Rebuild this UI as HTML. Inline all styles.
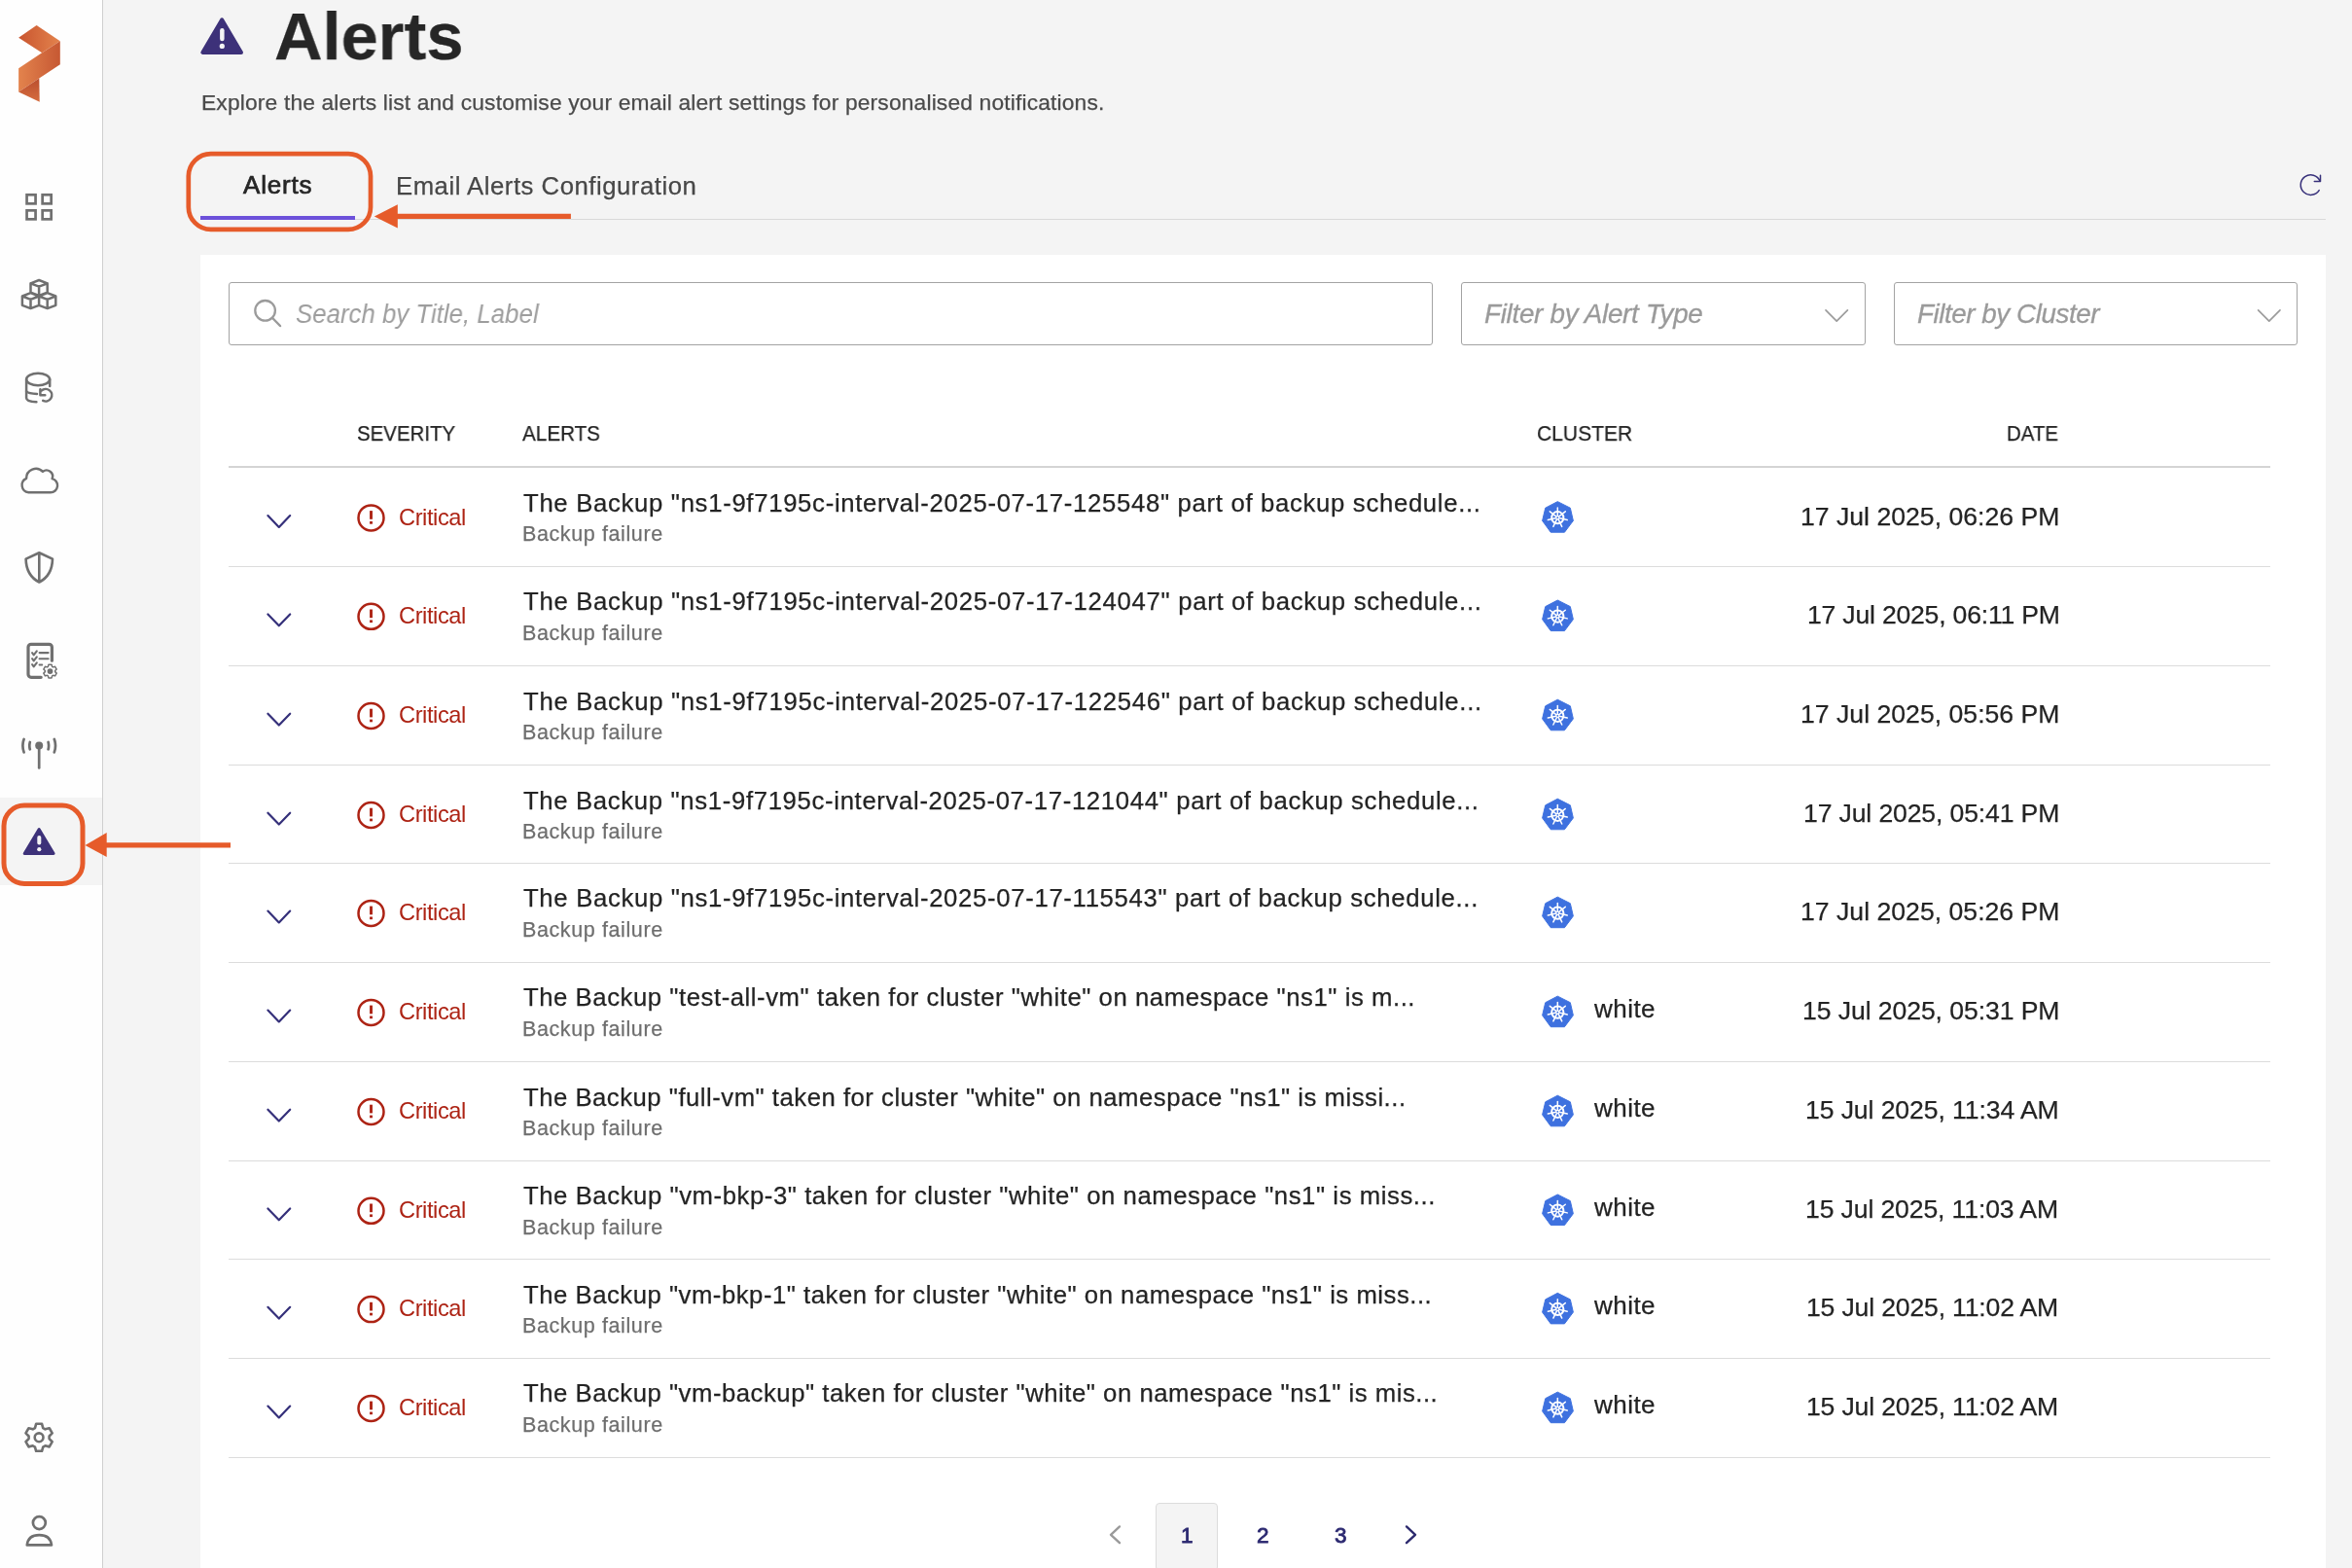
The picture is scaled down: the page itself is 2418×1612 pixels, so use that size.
<!DOCTYPE html>
<html><head><meta charset="utf-8"><title>Alerts</title>
<style>
html,body{margin:0;padding:0;}
body{width:2418px;height:1612px;overflow:hidden;position:relative;background:#f4f4f4;font-family:"Liberation Sans",sans-serif;}
.t{position:absolute;white-space:nowrap;line-height:1;will-change:transform;-webkit-text-stroke:0.25px currentColor;}
.box{position:absolute;box-sizing:border-box;border:1.5px solid #a3a3a3;border-radius:3px;background:#fff;}
</style></head><body>
<div style="position:absolute;left:0;top:0;width:105px;height:1612px;background:#fefefe;border-right:1.5px solid #cfcfcf"></div>
<div style="position:absolute;left:0;top:820px;width:105px;height:90px;background:#f4f4f4"></div>
<div style="position:absolute;left:206px;top:224.8px;width:2185px;height:1px;background:#d9d9d9"></div>
<div style="position:absolute;left:205.5px;top:222.4px;width:159.7px;height:3.8px;background:#6c50da"></div>
<div style="position:absolute;left:206px;top:262px;width:2185px;height:1350px;background:#ffffff"></div>
<div class="box" style="left:235px;top:290px;width:1238px;height:65px"></div>
<div class="box" style="left:1502px;top:290px;width:416px;height:64.5px"></div>
<div class="box" style="left:1947px;top:290px;width:415px;height:64.5px"></div>
<div style="position:absolute;left:235px;top:478.7px;width:2099px;height:2px;background:#d4d4d4"></div><div style="position:absolute;left:235px;top:581.7px;width:2099px;height:1px;background:#dcdcdc"></div><div style="position:absolute;left:235px;top:683.9px;width:2099px;height:1px;background:#dcdcdc"></div><div style="position:absolute;left:235px;top:785.9px;width:2099px;height:1px;background:#dcdcdc"></div><div style="position:absolute;left:235px;top:886.8px;width:2099px;height:1px;background:#dcdcdc"></div><div style="position:absolute;left:235px;top:988.8px;width:2099px;height:1px;background:#dcdcdc"></div><div style="position:absolute;left:235px;top:1090.9px;width:2099px;height:1px;background:#dcdcdc"></div><div style="position:absolute;left:235px;top:1192.7px;width:2099px;height:1px;background:#dcdcdc"></div><div style="position:absolute;left:235px;top:1294.0px;width:2099px;height:1px;background:#dcdcdc"></div><div style="position:absolute;left:235px;top:1395.8px;width:2099px;height:1px;background:#dcdcdc"></div><div style="position:absolute;left:235px;top:1497.8px;width:2099px;height:1px;background:#dcdcdc"></div>
<div style="position:absolute;left:1187.6px;top:1545.1px;width:64px;height:70px;box-sizing:border-box;background:#f4f4f4;border:1.5px solid #dcdcdc;border-radius:4px"></div>
<div class="t" style="left:282.11px;top:2.79px;font-size:69px;font-weight:bold;font-style:normal;color:#262626;letter-spacing:0.000px;transform:scaleX(0.9943);transform-origin:0 0;">Alerts</div>
<div class="t" style="left:207.00px;top:93.70px;font-size:22.8px;font-weight:normal;font-style:normal;color:#4a4a4a;letter-spacing:0.157px;">Explore the alerts list and customise your email alert settings for personalised notifications.</div>
<div class="t" style="left:250.20px;top:177.39px;font-size:26px;font-weight:normal;font-style:normal;color:#262626;letter-spacing:0.828px;-webkit-text-stroke:0.7px #262626;">Alerts</div>
<div class="t" style="left:406.80px;top:178.64px;font-size:25.7px;font-weight:normal;font-style:normal;color:#474747;letter-spacing:0.529px;">Email Alerts Configuration</div>
<div class="t" style="left:303.50px;top:309.94px;font-size:27px;font-weight:normal;font-style:italic;color:#9d9d9d;letter-spacing:0.000px;-webkit-text-stroke:0;transform:scaleX(0.9565);transform-origin:0 0;">Search by Title, Label</div>
<div class="t" style="left:1526.40px;top:308.77px;font-size:27.8px;font-weight:normal;font-style:italic;color:#9a9a9a;letter-spacing:-0.280px;-webkit-text-stroke:0.3px #9a9a9a;">Filter by Alert Type</div>
<div class="t" style="left:1970.50px;top:308.77px;font-size:27.8px;font-weight:normal;font-style:italic;color:#9a9a9a;letter-spacing:-0.448px;-webkit-text-stroke:0.3px #9a9a9a;">Filter by Cluster</div>
<div class="t" style="left:367.48px;top:434.81px;font-size:22.2px;font-weight:normal;font-style:normal;color:#232323;letter-spacing:0.000px;transform:scaleX(0.9207);transform-origin:0 0;">SEVERITY</div>
<div class="t" style="left:537.40px;top:434.81px;font-size:22.2px;font-weight:normal;font-style:normal;color:#232323;letter-spacing:0.000px;transform:scaleX(0.9317);transform-origin:0 0;">ALERTS</div>
<div class="t" style="left:1579.85px;top:434.81px;font-size:22.2px;font-weight:normal;font-style:normal;color:#232323;letter-spacing:0.000px;transform:scaleX(0.9484);transform-origin:0 0;">CLUSTER</div>
<div class="t" style="left:2063.18px;top:434.81px;font-size:22.2px;font-weight:normal;font-style:normal;color:#232323;letter-spacing:0.000px;transform:scaleX(0.9206);transform-origin:0 0;">DATE</div>
<div class="t" style="left:410.30px;top:520.52px;font-size:23.6px;font-weight:normal;font-style:normal;color:#ad2314;letter-spacing:-0.408px;-webkit-text-stroke:0;">Critical</div>
<div class="t" style="left:538.10px;top:504.94px;font-size:25.7px;font-weight:normal;font-style:normal;color:#232323;letter-spacing:0.692px;">The Backup &quot;ns1-9f7195c-interval-2025-07-17-125548&quot; part of backup schedule...</div>
<div class="t" style="left:537.10px;top:539.30px;font-size:21.5px;font-weight:normal;font-style:normal;color:#6e6e6e;letter-spacing:0.609px;">Backup failure</div>
<div class="t" style="left:1851.30px;top:517.68px;font-size:26.6px;font-weight:normal;font-style:normal;color:#232323;letter-spacing:0.012px;">17 Jul 2025, 06:26 PM</div>
<div class="t" style="left:410.30px;top:621.92px;font-size:23.6px;font-weight:normal;font-style:normal;color:#ad2314;letter-spacing:-0.408px;-webkit-text-stroke:0;">Critical</div>
<div class="t" style="left:538.10px;top:606.34px;font-size:25.7px;font-weight:normal;font-style:normal;color:#232323;letter-spacing:0.704px;">The Backup &quot;ns1-9f7195c-interval-2025-07-17-124047&quot; part of backup schedule...</div>
<div class="t" style="left:537.10px;top:640.70px;font-size:21.5px;font-weight:normal;font-style:normal;color:#6e6e6e;letter-spacing:0.609px;">Backup failure</div>
<div class="t" style="left:1857.70px;top:619.08px;font-size:26.6px;font-weight:normal;font-style:normal;color:#232323;letter-spacing:-0.210px;">17 Jul 2025, 06:11 PM</div>
<div class="t" style="left:410.30px;top:724.12px;font-size:23.6px;font-weight:normal;font-style:normal;color:#ad2314;letter-spacing:-0.408px;-webkit-text-stroke:0;">Critical</div>
<div class="t" style="left:538.10px;top:708.54px;font-size:25.7px;font-weight:normal;font-style:normal;color:#232323;letter-spacing:0.707px;">The Backup &quot;ns1-9f7195c-interval-2025-07-17-122546&quot; part of backup schedule...</div>
<div class="t" style="left:537.10px;top:742.90px;font-size:21.5px;font-weight:normal;font-style:normal;color:#6e6e6e;letter-spacing:0.609px;">Backup failure</div>
<div class="t" style="left:1851.20px;top:721.28px;font-size:26.6px;font-weight:normal;font-style:normal;color:#232323;letter-spacing:0.017px;">17 Jul 2025, 05:56 PM</div>
<div class="t" style="left:410.30px;top:826.12px;font-size:23.6px;font-weight:normal;font-style:normal;color:#ad2314;letter-spacing:-0.408px;-webkit-text-stroke:0;">Critical</div>
<div class="t" style="left:538.10px;top:810.54px;font-size:25.7px;font-weight:normal;font-style:normal;color:#232323;letter-spacing:0.666px;">The Backup &quot;ns1-9f7195c-interval-2025-07-17-121044&quot; part of backup schedule...</div>
<div class="t" style="left:537.10px;top:844.90px;font-size:21.5px;font-weight:normal;font-style:normal;color:#6e6e6e;letter-spacing:0.609px;">Backup failure</div>
<div class="t" style="left:1854.30px;top:823.28px;font-size:26.6px;font-weight:normal;font-style:normal;color:#232323;letter-spacing:-0.138px;">17 Jul 2025, 05:41 PM</div>
<div class="t" style="left:410.30px;top:927.02px;font-size:23.6px;font-weight:normal;font-style:normal;color:#ad2314;letter-spacing:-0.408px;-webkit-text-stroke:0;">Critical</div>
<div class="t" style="left:538.10px;top:911.44px;font-size:25.7px;font-weight:normal;font-style:normal;color:#232323;letter-spacing:0.682px;">The Backup &quot;ns1-9f7195c-interval-2025-07-17-115543&quot; part of backup schedule...</div>
<div class="t" style="left:537.10px;top:945.80px;font-size:21.5px;font-weight:normal;font-style:normal;color:#6e6e6e;letter-spacing:0.609px;">Backup failure</div>
<div class="t" style="left:1851.20px;top:924.18px;font-size:26.6px;font-weight:normal;font-style:normal;color:#232323;letter-spacing:0.017px;">17 Jul 2025, 05:26 PM</div>
<div class="t" style="left:410.30px;top:1029.02px;font-size:23.6px;font-weight:normal;font-style:normal;color:#ad2314;letter-spacing:-0.408px;-webkit-text-stroke:0;">Critical</div>
<div class="t" style="left:538.10px;top:1013.44px;font-size:25.7px;font-weight:normal;font-style:normal;color:#232323;letter-spacing:0.556px;">The Backup &quot;test-all-vm&quot; taken for cluster &quot;white&quot; on namespace &quot;ns1&quot; is m...</div>
<div class="t" style="left:537.10px;top:1047.80px;font-size:21.5px;font-weight:normal;font-style:normal;color:#6e6e6e;letter-spacing:0.609px;">Backup failure</div>
<div class="t" style="left:1638.90px;top:1023.99px;font-size:26px;font-weight:normal;font-style:normal;color:#232323;letter-spacing:0.466px;">white</div>
<div class="t" style="left:1853.20px;top:1026.18px;font-size:26.6px;font-weight:normal;font-style:normal;color:#232323;letter-spacing:-0.083px;">15 Jul 2025, 05:31 PM</div>
<div class="t" style="left:410.30px;top:1131.12px;font-size:23.6px;font-weight:normal;font-style:normal;color:#ad2314;letter-spacing:-0.408px;-webkit-text-stroke:0;">Critical</div>
<div class="t" style="left:538.10px;top:1115.54px;font-size:25.7px;font-weight:normal;font-style:normal;color:#232323;letter-spacing:0.507px;">The Backup &quot;full-vm&quot; taken for cluster &quot;white&quot; on namespace &quot;ns1&quot; is missi...</div>
<div class="t" style="left:537.10px;top:1149.90px;font-size:21.5px;font-weight:normal;font-style:normal;color:#6e6e6e;letter-spacing:0.609px;">Backup failure</div>
<div class="t" style="left:1638.90px;top:1126.09px;font-size:26px;font-weight:normal;font-style:normal;color:#232323;letter-spacing:0.466px;">white</div>
<div class="t" style="left:1855.50px;top:1128.28px;font-size:26.6px;font-weight:normal;font-style:normal;color:#232323;letter-spacing:-0.100px;">15 Jul 2025, 11:34 AM</div>
<div class="t" style="left:410.30px;top:1232.92px;font-size:23.6px;font-weight:normal;font-style:normal;color:#ad2314;letter-spacing:-0.408px;-webkit-text-stroke:0;">Critical</div>
<div class="t" style="left:538.10px;top:1217.34px;font-size:25.7px;font-weight:normal;font-style:normal;color:#232323;letter-spacing:0.568px;">The Backup &quot;vm-bkp-3&quot; taken for cluster &quot;white&quot; on namespace &quot;ns1&quot; is miss...</div>
<div class="t" style="left:537.10px;top:1251.70px;font-size:21.5px;font-weight:normal;font-style:normal;color:#6e6e6e;letter-spacing:0.609px;">Backup failure</div>
<div class="t" style="left:1638.90px;top:1227.89px;font-size:26px;font-weight:normal;font-style:normal;color:#232323;letter-spacing:0.466px;">white</div>
<div class="t" style="left:1856.10px;top:1230.08px;font-size:26.6px;font-weight:normal;font-style:normal;color:#232323;letter-spacing:-0.130px;">15 Jul 2025, 11:03 AM</div>
<div class="t" style="left:410.30px;top:1334.22px;font-size:23.6px;font-weight:normal;font-style:normal;color:#ad2314;letter-spacing:-0.408px;-webkit-text-stroke:0;">Critical</div>
<div class="t" style="left:538.10px;top:1318.64px;font-size:25.7px;font-weight:normal;font-style:normal;color:#232323;letter-spacing:0.520px;">The Backup &quot;vm-bkp-1&quot; taken for cluster &quot;white&quot; on namespace &quot;ns1&quot; is miss...</div>
<div class="t" style="left:537.10px;top:1353.00px;font-size:21.5px;font-weight:normal;font-style:normal;color:#6e6e6e;letter-spacing:0.609px;">Backup failure</div>
<div class="t" style="left:1638.90px;top:1329.19px;font-size:26px;font-weight:normal;font-style:normal;color:#232323;letter-spacing:0.466px;">white</div>
<div class="t" style="left:1856.90px;top:1331.38px;font-size:26.6px;font-weight:normal;font-style:normal;color:#232323;letter-spacing:-0.170px;">15 Jul 2025, 11:02 AM</div>
<div class="t" style="left:410.30px;top:1436.02px;font-size:23.6px;font-weight:normal;font-style:normal;color:#ad2314;letter-spacing:-0.408px;-webkit-text-stroke:0;">Critical</div>
<div class="t" style="left:538.10px;top:1420.44px;font-size:25.7px;font-weight:normal;font-style:normal;color:#232323;letter-spacing:0.524px;">The Backup &quot;vm-backup&quot; taken for cluster &quot;white&quot; on namespace &quot;ns1&quot; is mis...</div>
<div class="t" style="left:537.10px;top:1454.80px;font-size:21.5px;font-weight:normal;font-style:normal;color:#6e6e6e;letter-spacing:0.609px;">Backup failure</div>
<div class="t" style="left:1638.90px;top:1430.99px;font-size:26px;font-weight:normal;font-style:normal;color:#232323;letter-spacing:0.466px;">white</div>
<div class="t" style="left:1856.90px;top:1433.18px;font-size:26.6px;font-weight:normal;font-style:normal;color:#232323;letter-spacing:-0.170px;">15 Jul 2025, 11:02 AM</div>
<div class="t" style="left:1214.30px;top:1568.25px;font-size:22.5px;font-weight:normal;font-style:normal;color:#2b2870;letter-spacing:0.000px;-webkit-text-stroke:0.8px #2b2870;">1</div>
<div class="t" style="left:1291.70px;top:1568.25px;font-size:22.5px;font-weight:normal;font-style:normal;color:#2b2870;letter-spacing:0.000px;-webkit-text-stroke:0.8px #2b2870;">2</div>
<div class="t" style="left:1371.80px;top:1568.25px;font-size:22.5px;font-weight:normal;font-style:normal;color:#2b2870;letter-spacing:0.000px;-webkit-text-stroke:0.8px #2b2870;">3</div>
<svg style="position:absolute;left:0;top:0" width="2418" height="1612" viewBox="0 0 2418 1612">
<defs>
<linearGradient id="lg1" x1="19" y1="0" x2="62" y2="0" gradientUnits="userSpaceOnUse"><stop offset="0" stop-color="#c9552f"/><stop offset="1" stop-color="#e3834d"/></linearGradient>
<linearGradient id="lg2" x1="19" y1="0" x2="62" y2="0" gradientUnits="userSpaceOnUse"><stop offset="0" stop-color="#e3834d"/><stop offset="1" stop-color="#c65833"/></linearGradient>
<linearGradient id="lg3" x1="0" y1="80" x2="0" y2="105" gradientUnits="userSpaceOnUse"><stop offset="0" stop-color="#b94d2d"/><stop offset="1" stop-color="#d66d3f"/></linearGradient>
</defs>
<polygon points="19.1,38.7 37.6,25.9 61.8,42.3 43.1,54.2" fill="url(#lg1)"/>
<polygon points="43.1,54.2 61.8,42.3 61.8,66.2 19.1,94.5 19.1,70.2" fill="url(#lg2)"/>
<polygon points="19.1,94.5 40.3,80.5 40.7,104.8" fill="url(#lg3)"/>
<g fill="none" stroke="#707070" stroke-width="2.7" stroke-linejoin="miter"><rect x="27.55" y="200.25" width="9.0" height="9.1"/><rect x="43.65" y="200.25" width="9.0" height="9.1"/><rect x="27.55" y="216.35" width="9.0" height="9.0"/><rect x="43.65" y="216.35" width="9.0" height="9.0"/></g>
<path d="M40.10,288.00 L31.50,291.30 L31.50,300.60 L40.10,303.90 L48.70,300.60 L48.70,291.30 Z M31.50,291.30 L40.10,294.60 L48.70,291.30 M40.10,294.60 L40.10,303.90 M31.50,301.20 L22.90,304.50 L22.90,313.80 L31.50,317.10 L40.10,313.80 L40.10,304.50 Z M22.90,304.50 L31.50,307.80 L40.10,304.50 M31.50,307.80 L31.50,317.10 M48.70,301.20 L40.10,304.50 L40.10,313.80 L48.70,317.10 L57.30,313.80 L57.30,304.50 Z M40.10,304.50 L48.70,307.80 L57.30,304.50 M48.70,307.80 L48.70,317.10" fill="none" stroke="#707070" stroke-linecap="round" stroke-linejoin="round" stroke-width="2.5"/>
<g fill="none" stroke="#707070" stroke-linecap="round" stroke-linejoin="round" stroke-width="2.5"><ellipse cx="39.1" cy="390" rx="12" ry="6.3"/><path d="M27.1,390 V409 C27.1,411.5 31,413 37.4,413.3"/><path d="M51.2,390 V397"/><path d="M27.1,402.3 C28.5,404 32,404.8 38,405"/><path d="M42.6,401.7 A6.3,6.3 0 1 1 44.2,411.9"/><path d="M41.4,400.3 V406.2 H46.3"/></g>
<path d="M29.4,506.3 H51.9 A7.2,7.2 0 0 0 53.6,492.1 A6.2,6.2 0 0 0 44,484.9 A9.8,9.8 0 0 0 27.1,491.8 A7.6,7.6 0 0 0 29.4,506.3 Z" fill="none" stroke="#707070" stroke-linecap="round" stroke-linejoin="round" stroke-width="2.4"/>
<path d="M40.3,568.3 L26.6,574.6 C26.8,585 31.5,594 40.3,598.5 C49.1,594 53.8,585 54,574.6 Z M40.3,568.3 V598.5" fill="none" stroke="#707070" stroke-linecap="round" stroke-linejoin="round" stroke-width="2.6"/>
<g fill="none" stroke="#707070" stroke-linecap="round" stroke-linejoin="round" stroke-width="3.2"><path d="M42.2,696.3 H32 A3,3 0 0 1 29,693.3 V665.3 A3,3 0 0 1 32,662.3 H50.4 A3,3 0 0 1 53.4,665.3 V679.2"/></g>
<g fill="none" stroke="#707070" stroke-linecap="round" stroke-linejoin="round" stroke-width="2.1"><path d="M33.1,671.2 L34.7,673.3 L37.8,669.3 M33.1,677.2 L34.7,679.3 L37.8,675.3 M33.1,683.2 L34.7,685.3 L37.8,681.3"/><path d="M40.6,671.1 H49.6 M40.6,677.2 H49.6 M40.6,683.5 H43.2"/></g>
<path d="M49.38,685.35 L49.93,683.28 L53.07,683.28 L53.62,685.35 L54.56,685.89 L56.62,685.33 L58.19,688.05 L56.67,689.56 L56.67,690.64 L58.19,692.15 L56.62,694.87 L54.56,694.31 L53.62,694.85 L53.07,696.92 L49.93,696.92 L49.38,694.85 L48.44,694.31 L46.38,694.87 L44.81,692.15 L46.33,690.64 L46.33,689.56 L44.81,688.05 L46.38,685.33 L48.44,685.89 Z" fill="none" stroke="#707070" stroke-linecap="round" stroke-linejoin="round" stroke-width="1.5"/>
<circle cx="51.5" cy="690.1" r="2.9" fill="#707070"/>
<g fill="none" stroke="#707070" stroke-linecap="round" stroke-linejoin="round" stroke-width="2.7"><path d="M40.2,768 V789.5"/><path d="M30.8,763 Q29.8,766.6 30.8,770.3 M49.6,763 Q50.6,766.6 49.6,770.3"/><path d="M24.6,760 Q22.2,766.6 24.6,773.4 M55.8,760 Q58.2,766.6 55.8,773.4"/></g>
<circle cx="40.2" cy="766.6" r="4" fill="#707070"/>
<polygon points="40.15,852.58 25.18,877.52 55.12,877.52" fill="#3d3179" stroke="#3d3179" stroke-width="2.96" stroke-linejoin="round"/><rect x="38.3" y="859.0" width="4.00" height="9.60" rx="2.00" fill="#f4f4f4"/><circle cx="40.3" cy="873.2" r="2.1" fill="#f4f4f4"/>
<polygon points="228.15,20.26 208.27,53.93 248.03,53.93" fill="#3d3179" stroke="#3d3179" stroke-width="3.93" stroke-linejoin="round"/><rect x="226.1" y="29.1" width="4.50" height="13.20" rx="2.25" fill="#f4f4f4"/><circle cx="228.3" cy="47.4" r="2.6" fill="#f4f4f4"/>
<path d="M35.96,1468.04 L37.13,1463.81 L43.07,1463.81 L44.24,1468.04 L46.48,1469.33 L50.73,1468.23 L53.70,1473.38 L50.62,1476.51 L50.62,1479.09 L53.70,1482.22 L50.73,1487.37 L46.48,1486.27 L44.24,1487.56 L43.07,1491.79 L37.13,1491.79 L35.96,1487.56 L33.72,1486.27 L29.47,1487.37 L26.50,1482.22 L29.58,1479.09 L29.58,1476.51 L26.50,1473.38 L29.47,1468.23 L33.72,1469.33 Z" fill="none" stroke="#707070" stroke-linecap="round" stroke-linejoin="round" stroke-width="2.6"/>
<circle cx="40.1" cy="1477.8" r="4.4" fill="none" stroke="#707070" stroke-linecap="round" stroke-linejoin="round" stroke-width="2.6"/>
<circle cx="40.35" cy="1565.6" r="6.45" fill="none" stroke="#707070" stroke-linecap="round" stroke-linejoin="round" stroke-width="2.7"/>
<path d="M27.8,1588.4 C28.5,1582 33,1578.2 40.35,1578.2 C47.7,1578.2 52.2,1582 53,1588.4 Z" fill="none" stroke="#707070" stroke-linecap="round" stroke-linejoin="round" stroke-width="2.7"/>
<path d="M2385.0,186.0 A10.3,10.3 0 1 0 2384.2,195.65" fill="none" stroke="#37307a" stroke-width="1.5" stroke-linecap="round"/>
<path d="M2385.5,180.2 V186.5 H2379.3" fill="none" stroke="#37307a" stroke-width="1.5" stroke-linecap="round" stroke-linejoin="round"/>
<circle cx="272.6" cy="319.3" r="10.3" fill="none" stroke="#9b9b9b" stroke-width="2.3"/>
<path d="M280.2,327 L288,335" fill="none" stroke="#9b9b9b" stroke-width="2.5" stroke-linecap="round"/>
<polyline points="1877.00,318.80 1888.20,330.20 1899.40,318.80" fill="none" stroke="#9c9c9c" stroke-width="1.7" stroke-linecap="round" stroke-linejoin="round"/>
<polyline points="2321.60,318.80 2332.80,330.20 2344.00,318.80" fill="none" stroke="#9c9c9c" stroke-width="1.7" stroke-linecap="round" stroke-linejoin="round"/>
<polyline points="275.40,530.10 286.80,541.90 298.20,530.10" fill="none" stroke="#35307a" stroke-width="2.2" stroke-linecap="round" stroke-linejoin="round"/>
<circle cx="381.5" cy="532.4" r="13.0" fill="none" stroke="#ad2314" stroke-width="2.5"/><rect x="380.05" y="525.10" width="2.9" height="8.7" fill="#ad2314"/><rect x="380.05" y="536.00" width="2.9" height="2.7" fill="#ad2314"/>
<polygon points="1601.30,515.63 1614.33,522.20 1617.37,535.33 1608.45,547.19 1594.24,547.19 1585.62,535.33 1588.76,522.20" fill="#3e71df" stroke="#3e71df" stroke-width="1.0" stroke-linejoin="round"/>
<circle cx="1601.30" cy="532.20" r="6.1" fill="none" stroke="#fff" stroke-width="2.0"/>
<line x1="1601.30" y1="530.60" x2="1601.30" y2="522.00" stroke="#fff" stroke-width="1.5" stroke-linecap="round"/>
<line x1="1602.55" y1="531.20" x2="1609.27" y2="525.84" stroke="#fff" stroke-width="1.5" stroke-linecap="round"/>
<line x1="1602.86" y1="532.56" x2="1611.24" y2="534.47" stroke="#fff" stroke-width="1.5" stroke-linecap="round"/>
<line x1="1601.99" y1="533.64" x2="1605.73" y2="541.39" stroke="#fff" stroke-width="1.5" stroke-linecap="round"/>
<line x1="1600.61" y1="533.64" x2="1596.87" y2="541.39" stroke="#fff" stroke-width="1.5" stroke-linecap="round"/>
<line x1="1599.74" y1="532.56" x2="1591.36" y2="534.47" stroke="#fff" stroke-width="1.5" stroke-linecap="round"/>
<line x1="1600.05" y1="531.20" x2="1593.33" y2="525.84" stroke="#fff" stroke-width="1.5" stroke-linecap="round"/>
<circle cx="1601.30" cy="532.20" r="2.0" fill="#fff"/><circle cx="1601.30" cy="532.20" r="0.9" fill="#3e71df"/>
<polyline points="275.40,631.50 286.80,643.30 298.20,631.50" fill="none" stroke="#35307a" stroke-width="2.2" stroke-linecap="round" stroke-linejoin="round"/>
<circle cx="381.5" cy="633.8" r="13.0" fill="none" stroke="#ad2314" stroke-width="2.5"/><rect x="380.05" y="626.50" width="2.9" height="8.7" fill="#ad2314"/><rect x="380.05" y="637.40" width="2.9" height="2.7" fill="#ad2314"/>
<polygon points="1601.30,617.03 1614.33,623.60 1617.37,636.73 1608.45,648.59 1594.24,648.59 1585.62,636.73 1588.76,623.60" fill="#3e71df" stroke="#3e71df" stroke-width="1.0" stroke-linejoin="round"/>
<circle cx="1601.30" cy="633.60" r="6.1" fill="none" stroke="#fff" stroke-width="2.0"/>
<line x1="1601.30" y1="632.00" x2="1601.30" y2="623.40" stroke="#fff" stroke-width="1.5" stroke-linecap="round"/>
<line x1="1602.55" y1="632.60" x2="1609.27" y2="627.24" stroke="#fff" stroke-width="1.5" stroke-linecap="round"/>
<line x1="1602.86" y1="633.96" x2="1611.24" y2="635.87" stroke="#fff" stroke-width="1.5" stroke-linecap="round"/>
<line x1="1601.99" y1="635.04" x2="1605.73" y2="642.79" stroke="#fff" stroke-width="1.5" stroke-linecap="round"/>
<line x1="1600.61" y1="635.04" x2="1596.87" y2="642.79" stroke="#fff" stroke-width="1.5" stroke-linecap="round"/>
<line x1="1599.74" y1="633.96" x2="1591.36" y2="635.87" stroke="#fff" stroke-width="1.5" stroke-linecap="round"/>
<line x1="1600.05" y1="632.60" x2="1593.33" y2="627.24" stroke="#fff" stroke-width="1.5" stroke-linecap="round"/>
<circle cx="1601.30" cy="633.60" r="2.0" fill="#fff"/><circle cx="1601.30" cy="633.60" r="0.9" fill="#3e71df"/>
<polyline points="275.40,733.70 286.80,745.50 298.20,733.70" fill="none" stroke="#35307a" stroke-width="2.2" stroke-linecap="round" stroke-linejoin="round"/>
<circle cx="381.5" cy="736.0" r="13.0" fill="none" stroke="#ad2314" stroke-width="2.5"/><rect x="380.05" y="728.70" width="2.9" height="8.7" fill="#ad2314"/><rect x="380.05" y="739.60" width="2.9" height="2.7" fill="#ad2314"/>
<polygon points="1601.30,719.23 1614.33,725.80 1617.37,738.93 1608.45,750.79 1594.24,750.79 1585.62,738.93 1588.76,725.80" fill="#3e71df" stroke="#3e71df" stroke-width="1.0" stroke-linejoin="round"/>
<circle cx="1601.30" cy="735.80" r="6.1" fill="none" stroke="#fff" stroke-width="2.0"/>
<line x1="1601.30" y1="734.20" x2="1601.30" y2="725.60" stroke="#fff" stroke-width="1.5" stroke-linecap="round"/>
<line x1="1602.55" y1="734.80" x2="1609.27" y2="729.44" stroke="#fff" stroke-width="1.5" stroke-linecap="round"/>
<line x1="1602.86" y1="736.16" x2="1611.24" y2="738.07" stroke="#fff" stroke-width="1.5" stroke-linecap="round"/>
<line x1="1601.99" y1="737.24" x2="1605.73" y2="744.99" stroke="#fff" stroke-width="1.5" stroke-linecap="round"/>
<line x1="1600.61" y1="737.24" x2="1596.87" y2="744.99" stroke="#fff" stroke-width="1.5" stroke-linecap="round"/>
<line x1="1599.74" y1="736.16" x2="1591.36" y2="738.07" stroke="#fff" stroke-width="1.5" stroke-linecap="round"/>
<line x1="1600.05" y1="734.80" x2="1593.33" y2="729.44" stroke="#fff" stroke-width="1.5" stroke-linecap="round"/>
<circle cx="1601.30" cy="735.80" r="2.0" fill="#fff"/><circle cx="1601.30" cy="735.80" r="0.9" fill="#3e71df"/>
<polyline points="275.40,835.70 286.80,847.50 298.20,835.70" fill="none" stroke="#35307a" stroke-width="2.2" stroke-linecap="round" stroke-linejoin="round"/>
<circle cx="381.5" cy="838.0" r="13.0" fill="none" stroke="#ad2314" stroke-width="2.5"/><rect x="380.05" y="830.70" width="2.9" height="8.7" fill="#ad2314"/><rect x="380.05" y="841.60" width="2.9" height="2.7" fill="#ad2314"/>
<polygon points="1601.30,821.23 1614.33,827.80 1617.37,840.93 1608.45,852.79 1594.24,852.79 1585.62,840.93 1588.76,827.80" fill="#3e71df" stroke="#3e71df" stroke-width="1.0" stroke-linejoin="round"/>
<circle cx="1601.30" cy="837.80" r="6.1" fill="none" stroke="#fff" stroke-width="2.0"/>
<line x1="1601.30" y1="836.20" x2="1601.30" y2="827.60" stroke="#fff" stroke-width="1.5" stroke-linecap="round"/>
<line x1="1602.55" y1="836.80" x2="1609.27" y2="831.44" stroke="#fff" stroke-width="1.5" stroke-linecap="round"/>
<line x1="1602.86" y1="838.16" x2="1611.24" y2="840.07" stroke="#fff" stroke-width="1.5" stroke-linecap="round"/>
<line x1="1601.99" y1="839.24" x2="1605.73" y2="846.99" stroke="#fff" stroke-width="1.5" stroke-linecap="round"/>
<line x1="1600.61" y1="839.24" x2="1596.87" y2="846.99" stroke="#fff" stroke-width="1.5" stroke-linecap="round"/>
<line x1="1599.74" y1="838.16" x2="1591.36" y2="840.07" stroke="#fff" stroke-width="1.5" stroke-linecap="round"/>
<line x1="1600.05" y1="836.80" x2="1593.33" y2="831.44" stroke="#fff" stroke-width="1.5" stroke-linecap="round"/>
<circle cx="1601.30" cy="837.80" r="2.0" fill="#fff"/><circle cx="1601.30" cy="837.80" r="0.9" fill="#3e71df"/>
<polyline points="275.40,936.60 286.80,948.40 298.20,936.60" fill="none" stroke="#35307a" stroke-width="2.2" stroke-linecap="round" stroke-linejoin="round"/>
<circle cx="381.5" cy="938.9" r="13.0" fill="none" stroke="#ad2314" stroke-width="2.5"/><rect x="380.05" y="931.60" width="2.9" height="8.7" fill="#ad2314"/><rect x="380.05" y="942.50" width="2.9" height="2.7" fill="#ad2314"/>
<polygon points="1601.30,922.13 1614.33,928.70 1617.37,941.83 1608.45,953.69 1594.24,953.69 1585.62,941.83 1588.76,928.70" fill="#3e71df" stroke="#3e71df" stroke-width="1.0" stroke-linejoin="round"/>
<circle cx="1601.30" cy="938.70" r="6.1" fill="none" stroke="#fff" stroke-width="2.0"/>
<line x1="1601.30" y1="937.10" x2="1601.30" y2="928.50" stroke="#fff" stroke-width="1.5" stroke-linecap="round"/>
<line x1="1602.55" y1="937.70" x2="1609.27" y2="932.34" stroke="#fff" stroke-width="1.5" stroke-linecap="round"/>
<line x1="1602.86" y1="939.06" x2="1611.24" y2="940.97" stroke="#fff" stroke-width="1.5" stroke-linecap="round"/>
<line x1="1601.99" y1="940.14" x2="1605.73" y2="947.89" stroke="#fff" stroke-width="1.5" stroke-linecap="round"/>
<line x1="1600.61" y1="940.14" x2="1596.87" y2="947.89" stroke="#fff" stroke-width="1.5" stroke-linecap="round"/>
<line x1="1599.74" y1="939.06" x2="1591.36" y2="940.97" stroke="#fff" stroke-width="1.5" stroke-linecap="round"/>
<line x1="1600.05" y1="937.70" x2="1593.33" y2="932.34" stroke="#fff" stroke-width="1.5" stroke-linecap="round"/>
<circle cx="1601.30" cy="938.70" r="2.0" fill="#fff"/><circle cx="1601.30" cy="938.70" r="0.9" fill="#3e71df"/>
<polyline points="275.40,1038.60 286.80,1050.40 298.20,1038.60" fill="none" stroke="#35307a" stroke-width="2.2" stroke-linecap="round" stroke-linejoin="round"/>
<circle cx="381.5" cy="1040.9" r="13.0" fill="none" stroke="#ad2314" stroke-width="2.5"/><rect x="380.05" y="1033.60" width="2.9" height="8.7" fill="#ad2314"/><rect x="380.05" y="1044.50" width="2.9" height="2.7" fill="#ad2314"/>
<polygon points="1601.30,1024.13 1614.33,1030.70 1617.37,1043.83 1608.45,1055.69 1594.24,1055.69 1585.62,1043.83 1588.76,1030.70" fill="#3e71df" stroke="#3e71df" stroke-width="1.0" stroke-linejoin="round"/>
<circle cx="1601.30" cy="1040.70" r="6.1" fill="none" stroke="#fff" stroke-width="2.0"/>
<line x1="1601.30" y1="1039.10" x2="1601.30" y2="1030.50" stroke="#fff" stroke-width="1.5" stroke-linecap="round"/>
<line x1="1602.55" y1="1039.70" x2="1609.27" y2="1034.34" stroke="#fff" stroke-width="1.5" stroke-linecap="round"/>
<line x1="1602.86" y1="1041.06" x2="1611.24" y2="1042.97" stroke="#fff" stroke-width="1.5" stroke-linecap="round"/>
<line x1="1601.99" y1="1042.14" x2="1605.73" y2="1049.89" stroke="#fff" stroke-width="1.5" stroke-linecap="round"/>
<line x1="1600.61" y1="1042.14" x2="1596.87" y2="1049.89" stroke="#fff" stroke-width="1.5" stroke-linecap="round"/>
<line x1="1599.74" y1="1041.06" x2="1591.36" y2="1042.97" stroke="#fff" stroke-width="1.5" stroke-linecap="round"/>
<line x1="1600.05" y1="1039.70" x2="1593.33" y2="1034.34" stroke="#fff" stroke-width="1.5" stroke-linecap="round"/>
<circle cx="1601.30" cy="1040.70" r="2.0" fill="#fff"/><circle cx="1601.30" cy="1040.70" r="0.9" fill="#3e71df"/>
<polyline points="275.40,1140.70 286.80,1152.50 298.20,1140.70" fill="none" stroke="#35307a" stroke-width="2.2" stroke-linecap="round" stroke-linejoin="round"/>
<circle cx="381.5" cy="1143.0" r="13.0" fill="none" stroke="#ad2314" stroke-width="2.5"/><rect x="380.05" y="1135.70" width="2.9" height="8.7" fill="#ad2314"/><rect x="380.05" y="1146.60" width="2.9" height="2.7" fill="#ad2314"/>
<polygon points="1601.30,1126.23 1614.33,1132.80 1617.37,1145.93 1608.45,1157.79 1594.24,1157.79 1585.62,1145.93 1588.76,1132.80" fill="#3e71df" stroke="#3e71df" stroke-width="1.0" stroke-linejoin="round"/>
<circle cx="1601.30" cy="1142.80" r="6.1" fill="none" stroke="#fff" stroke-width="2.0"/>
<line x1="1601.30" y1="1141.20" x2="1601.30" y2="1132.60" stroke="#fff" stroke-width="1.5" stroke-linecap="round"/>
<line x1="1602.55" y1="1141.80" x2="1609.27" y2="1136.44" stroke="#fff" stroke-width="1.5" stroke-linecap="round"/>
<line x1="1602.86" y1="1143.16" x2="1611.24" y2="1145.07" stroke="#fff" stroke-width="1.5" stroke-linecap="round"/>
<line x1="1601.99" y1="1144.24" x2="1605.73" y2="1151.99" stroke="#fff" stroke-width="1.5" stroke-linecap="round"/>
<line x1="1600.61" y1="1144.24" x2="1596.87" y2="1151.99" stroke="#fff" stroke-width="1.5" stroke-linecap="round"/>
<line x1="1599.74" y1="1143.16" x2="1591.36" y2="1145.07" stroke="#fff" stroke-width="1.5" stroke-linecap="round"/>
<line x1="1600.05" y1="1141.80" x2="1593.33" y2="1136.44" stroke="#fff" stroke-width="1.5" stroke-linecap="round"/>
<circle cx="1601.30" cy="1142.80" r="2.0" fill="#fff"/><circle cx="1601.30" cy="1142.80" r="0.9" fill="#3e71df"/>
<polyline points="275.40,1242.50 286.80,1254.30 298.20,1242.50" fill="none" stroke="#35307a" stroke-width="2.2" stroke-linecap="round" stroke-linejoin="round"/>
<circle cx="381.5" cy="1244.8" r="13.0" fill="none" stroke="#ad2314" stroke-width="2.5"/><rect x="380.05" y="1237.50" width="2.9" height="8.7" fill="#ad2314"/><rect x="380.05" y="1248.40" width="2.9" height="2.7" fill="#ad2314"/>
<polygon points="1601.30,1228.03 1614.33,1234.60 1617.37,1247.73 1608.45,1259.59 1594.24,1259.59 1585.62,1247.73 1588.76,1234.60" fill="#3e71df" stroke="#3e71df" stroke-width="1.0" stroke-linejoin="round"/>
<circle cx="1601.30" cy="1244.60" r="6.1" fill="none" stroke="#fff" stroke-width="2.0"/>
<line x1="1601.30" y1="1243.00" x2="1601.30" y2="1234.40" stroke="#fff" stroke-width="1.5" stroke-linecap="round"/>
<line x1="1602.55" y1="1243.60" x2="1609.27" y2="1238.24" stroke="#fff" stroke-width="1.5" stroke-linecap="round"/>
<line x1="1602.86" y1="1244.96" x2="1611.24" y2="1246.87" stroke="#fff" stroke-width="1.5" stroke-linecap="round"/>
<line x1="1601.99" y1="1246.04" x2="1605.73" y2="1253.79" stroke="#fff" stroke-width="1.5" stroke-linecap="round"/>
<line x1="1600.61" y1="1246.04" x2="1596.87" y2="1253.79" stroke="#fff" stroke-width="1.5" stroke-linecap="round"/>
<line x1="1599.74" y1="1244.96" x2="1591.36" y2="1246.87" stroke="#fff" stroke-width="1.5" stroke-linecap="round"/>
<line x1="1600.05" y1="1243.60" x2="1593.33" y2="1238.24" stroke="#fff" stroke-width="1.5" stroke-linecap="round"/>
<circle cx="1601.30" cy="1244.60" r="2.0" fill="#fff"/><circle cx="1601.30" cy="1244.60" r="0.9" fill="#3e71df"/>
<polyline points="275.40,1343.80 286.80,1355.60 298.20,1343.80" fill="none" stroke="#35307a" stroke-width="2.2" stroke-linecap="round" stroke-linejoin="round"/>
<circle cx="381.5" cy="1346.1" r="13.0" fill="none" stroke="#ad2314" stroke-width="2.5"/><rect x="380.05" y="1338.80" width="2.9" height="8.7" fill="#ad2314"/><rect x="380.05" y="1349.70" width="2.9" height="2.7" fill="#ad2314"/>
<polygon points="1601.30,1329.33 1614.33,1335.90 1617.37,1349.03 1608.45,1360.89 1594.24,1360.89 1585.62,1349.03 1588.76,1335.90" fill="#3e71df" stroke="#3e71df" stroke-width="1.0" stroke-linejoin="round"/>
<circle cx="1601.30" cy="1345.90" r="6.1" fill="none" stroke="#fff" stroke-width="2.0"/>
<line x1="1601.30" y1="1344.30" x2="1601.30" y2="1335.70" stroke="#fff" stroke-width="1.5" stroke-linecap="round"/>
<line x1="1602.55" y1="1344.90" x2="1609.27" y2="1339.54" stroke="#fff" stroke-width="1.5" stroke-linecap="round"/>
<line x1="1602.86" y1="1346.26" x2="1611.24" y2="1348.17" stroke="#fff" stroke-width="1.5" stroke-linecap="round"/>
<line x1="1601.99" y1="1347.34" x2="1605.73" y2="1355.09" stroke="#fff" stroke-width="1.5" stroke-linecap="round"/>
<line x1="1600.61" y1="1347.34" x2="1596.87" y2="1355.09" stroke="#fff" stroke-width="1.5" stroke-linecap="round"/>
<line x1="1599.74" y1="1346.26" x2="1591.36" y2="1348.17" stroke="#fff" stroke-width="1.5" stroke-linecap="round"/>
<line x1="1600.05" y1="1344.90" x2="1593.33" y2="1339.54" stroke="#fff" stroke-width="1.5" stroke-linecap="round"/>
<circle cx="1601.30" cy="1345.90" r="2.0" fill="#fff"/><circle cx="1601.30" cy="1345.90" r="0.9" fill="#3e71df"/>
<polyline points="275.40,1445.60 286.80,1457.40 298.20,1445.60" fill="none" stroke="#35307a" stroke-width="2.2" stroke-linecap="round" stroke-linejoin="round"/>
<circle cx="381.5" cy="1447.9" r="13.0" fill="none" stroke="#ad2314" stroke-width="2.5"/><rect x="380.05" y="1440.60" width="2.9" height="8.7" fill="#ad2314"/><rect x="380.05" y="1451.50" width="2.9" height="2.7" fill="#ad2314"/>
<polygon points="1601.30,1431.13 1614.33,1437.70 1617.37,1450.83 1608.45,1462.69 1594.24,1462.69 1585.62,1450.83 1588.76,1437.70" fill="#3e71df" stroke="#3e71df" stroke-width="1.0" stroke-linejoin="round"/>
<circle cx="1601.30" cy="1447.70" r="6.1" fill="none" stroke="#fff" stroke-width="2.0"/>
<line x1="1601.30" y1="1446.10" x2="1601.30" y2="1437.50" stroke="#fff" stroke-width="1.5" stroke-linecap="round"/>
<line x1="1602.55" y1="1446.70" x2="1609.27" y2="1441.34" stroke="#fff" stroke-width="1.5" stroke-linecap="round"/>
<line x1="1602.86" y1="1448.06" x2="1611.24" y2="1449.97" stroke="#fff" stroke-width="1.5" stroke-linecap="round"/>
<line x1="1601.99" y1="1449.14" x2="1605.73" y2="1456.89" stroke="#fff" stroke-width="1.5" stroke-linecap="round"/>
<line x1="1600.61" y1="1449.14" x2="1596.87" y2="1456.89" stroke="#fff" stroke-width="1.5" stroke-linecap="round"/>
<line x1="1599.74" y1="1448.06" x2="1591.36" y2="1449.97" stroke="#fff" stroke-width="1.5" stroke-linecap="round"/>
<line x1="1600.05" y1="1446.70" x2="1593.33" y2="1441.34" stroke="#fff" stroke-width="1.5" stroke-linecap="round"/>
<circle cx="1601.30" cy="1447.70" r="2.0" fill="#fff"/><circle cx="1601.30" cy="1447.70" r="0.9" fill="#3e71df"/>
<polyline points="1151,1569.4 1142,1577.8 1151,1586.2" fill="none" stroke="#9a9a9a" stroke-width="2.4" stroke-linecap="round" stroke-linejoin="round"/>
<polyline points="1446,1569.4 1455,1577.8 1446,1586.2" fill="none" stroke="#2d2a6e" stroke-width="2.4" stroke-linecap="round" stroke-linejoin="round"/>
<rect x="193.8" y="158.1" width="187.2" height="77.8" rx="23" fill="none" stroke="#e65b2a" stroke-width="4.7"/>
<path d="M405,222.4 H586.9" stroke="#e65b2a" stroke-width="5.3"/>
<polygon points="384.8,222.4 408.8,210.2 408.8,234.6" fill="#e65b2a"/>
<rect x="4" y="828" width="81" height="80.5" rx="21" fill="none" stroke="#e65b2a" stroke-width="5"/>
<path d="M106,868.9 H237" stroke="#e65b2a" stroke-width="5.3"/>
<polygon points="87.5,868.9 109.7,856 109.7,881" fill="#e65b2a"/>
</svg>
</body></html>
